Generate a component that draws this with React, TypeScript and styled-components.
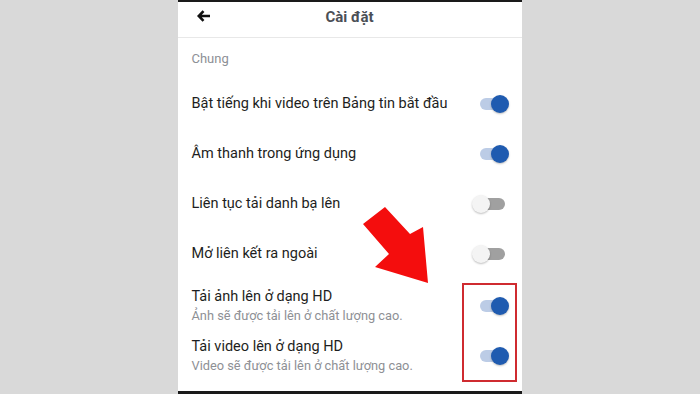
import React from "react";
import styled, { createGlobalStyle } from "styled-components";

const Global = createGlobalStyle`
  html, body { margin: 0; padding: 0; background: #d9d9d9; }
  body { font-family: Roboto, "Noto Sans", sans-serif; }
`;

const Page = styled.div`
  width: 700px;
  height: 394px;
  display: flex;
  justify-content: center;
  overflow: hidden;
  position: relative;
`;

const Panel = styled.div`
  width: 344px;
  margin-left: -1px;
  height: 394px;
  background: #ffffff;
  border-top: 2px solid #1a1a1a;
  border-bottom: 3px solid #1a1a1a;
  box-sizing: border-box;
  display: flex;
  flex-direction: column;
  position: relative;
`;

const Header = styled.div`
  height: 35px;
  display: flex;
  align-items: center;
  justify-content: center;
  position: relative;
  border-bottom: 1px solid #e8e8e8;
`;

const Back = styled.div`
  position: absolute;
  left: 18px;
  top: 6px;
  width: 16px;
  height: 16px;
  display: flex;
`;

const Title = styled.div`
  font-size: 15px;
  font-weight: 700;
  color: #4b4f56;
  margin-top: -5px;
`;

const SectionLabel = styled.div`
  height: 41px;
  padding: 13px 0 0 14px;
  box-sizing: border-box;
  font-size: 13px;
  color: #8d9096;
`;

const Row = styled.div<{ $tall?: boolean }>`
  height: 50px;
  display: flex;
  align-items: center;
  justify-content: space-between;
  padding: 0 13px 0 14px;
  margin-top: ${(p) => (p.$tall ? "2px" : "0")};
  margin-bottom: ${(p) => (p.$tall ? "-2px" : "0")};
`;

const Texts = styled.div`
  display: flex;
  flex-direction: column;
  gap: 1px;
`;

const Label = styled.div`
  font-size: 14.5px;
  color: #1d1e21;
  line-height: 18px;
`;

const Sub = styled.div`
  font-size: 12.8px;
  color: #8e9095;
  line-height: 17px;
`;

const Toggle = styled.div`
  width: 37px;
  height: 18px;
  position: relative;
  flex: none;
`;

const Track = styled.div<{ $on?: boolean }>`
  position: absolute;
  left: 8px;
  top: 3px;
  width: 25px;
  height: 12px;
  border-radius: 6px;
  background: ${(p) => (p.$on ? "#bccce6" : "#a0a0a0")};
`;

const Thumb = styled.div<{ $on?: boolean }>`
  position: absolute;
  top: 0;
  ${(p) => (p.$on ? "right: 0;" : "left: 0;")}
  width: 18px;
  height: 18px;
  border-radius: 50%;
  background: ${(p) => (p.$on ? "#1f5bb0" : "#f4f4f4")};
  box-shadow: 0 1px 2px rgba(0, 0, 0, 0.25);
`;

const Highlight = styled.div`
  position: absolute;
  left: 284px;
  top: 281px;
  width: 51px;
  height: 95px;
  border: 2px solid #cf2b30;
`;

const Arrow = styled.svg`
  position: absolute;
  left: 0;
  top: 0;
  width: 700px;
  height: 394px;
  pointer-events: none;
`;

const Switch = ({ on }: { on?: boolean }) => (
  <Toggle>
    <Track $on={on} />
    <Thumb $on={on} />
  </Toggle>
);

const rows: { label: string; sub?: string; on: boolean }[] = [
  { label: "Bật tiếng khi video trên Bảng tin bắt đầu", on: true },
  { label: "Âm thanh trong ứng dụng", on: true },
  { label: "Liên tục tải danh bạ lên", on: false },
  { label: "Mở liên kết ra ngoài", on: false },
  { label: "Tải ảnh lên ở dạng HD", sub: "Ảnh sẽ được tải lên ở chất lượng cao.", on: true },
  { label: "Tải video lên ở dạng HD", sub: "Video sẽ được tải lên ở chất lượng cao.", on: true },
];

export default function App() {
  return (
    <Page>
      <Global />
      <Panel>
        <Header>
          <Back>
            <svg width="16" height="16" viewBox="0 0 16 16">
              <path d="M14 8H3M7.5 3.2L2.8 8l4.7 4.8" stroke="#111" strokeWidth="2.6" fill="none" strokeLinecap="butt" strokeLinejoin="miter" />
            </svg>
          </Back>
          <Title>Cài đặt</Title>
        </Header>
        <SectionLabel>Chung</SectionLabel>
        {rows.map((r) => (
          <Row key={r.label} $tall={!!r.sub}>
            <Texts>
              <Label>{r.label}</Label>
              {r.sub && <Sub>{r.sub}</Sub>}
            </Texts>
            <Switch on={r.on} />
          </Row>
        ))}
        <Highlight />
      </Panel>
      <Arrow viewBox="0 0 700 394">
        <polygon points="363,224 385,207 410,234 423,227 428,283 375,267 389,254" fill="#f40d0d" />
      </Arrow>
    </Page>
  );
}
